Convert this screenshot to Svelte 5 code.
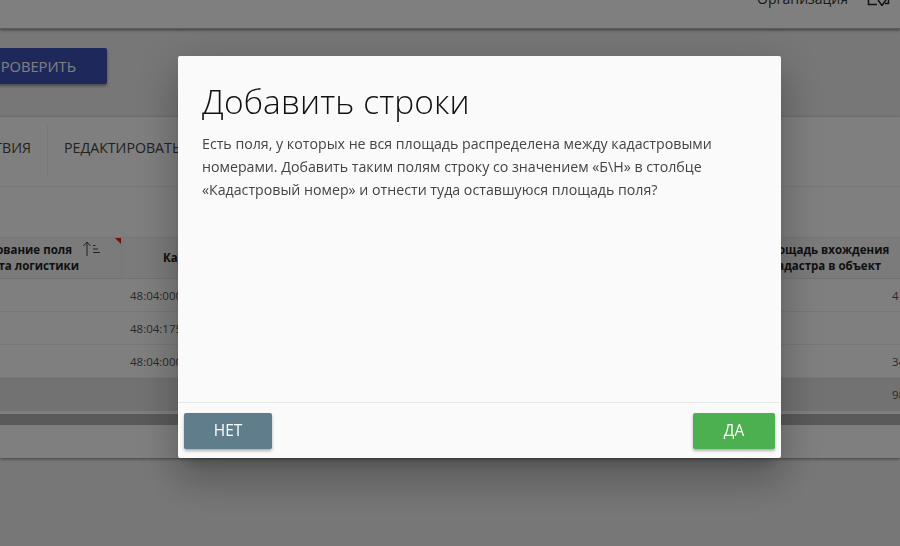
<script>
  const rows = [
    { cad: '48:04:000', area: '4' },
    { cad: '48:04:175', area: '' },
    { cad: '48:04:000', area: '34' }
  ];
</script>

<div class="page">
  <header class="topbar">
    <span class="org">Организация</span>
    <svg class="logout" width="24" height="24" viewBox="0 0 24 24" fill="none" stroke="#222" stroke-width="1.5">
      <path d="M1.500 0V22.500H10M21.500 14V21.500H18M11 18L15 23.500L19 18" />
    </svg>
  </header>

  <div class="actions">
    <button class="check">ПРОВЕРИТЬ</button>
  </div>

  <section class="card">
    <nav class="tabs">
      <span class="tab first">ДЕЙСТВИЯ</span>
      <span class="tab">РЕДАКТИРОВАТЬ</span>
    </nav>
    <div class="spacer"></div>
    <div class="thead">
      <div class="c1 th left">
        <span><b class="line1">Наименование поля</b><b>объекта логистики</b></span>
        <svg class="sort" width="20" height="16" viewBox="0 0 20 16" fill="none" stroke="#444" stroke-width="1">
          <path d="M5 15V1M1.500 5L5 1l3.500 4M11 4.500h2.500M11 8h5M11 11.500h7" />
        </svg>
        <i class="flag"></i>
      </div>
      <div class="c2 th">Кадастровый номер</div>
      <div class="c3 th right"><span>Площадь вхождения<br />кадастра в объект</span></div>
    </div>
    {#each rows as r}
      <div class="row">
        <div class="c1"></div>
        <div class="c2 cell">{r.cad}</div>
        <div class="c3 cell num">{r.area}</div>
      </div>
    {/each}
    <div class="row total">
      <div class="c1"></div>
      <div class="c2"></div>
      <div class="c3 cell num">98</div>
    </div>
    <div class="scrollbar"></div>
    <div class="foot"></div>
  </section>
</div>

<div class="overlay"></div>

<div class="modal" role="dialog">
  <div class="content">
    <h4>Добавить строки</h4>
    <p>Есть поля, у которых не вся площадь распределена между кадастровыми номерами. Добавить таким полям строку со значением «Б\Н» в столбце «Кадастровый номер» и отнести туда оставшуюся площадь поля?</p>
  </div>
  <div class="footer">
    <button class="btn no">НЕТ</button>
    <button class="btn yes">ДА</button>
  </div>
</div>

<style>
  :global(body) {
    margin: 0;
    overflow: hidden;
    background: #eee;
    font-family: "Open Sans", "Noto Sans", sans-serif;
  }
  .page {
    width: 900px;
    height: 546px;
    overflow: hidden;
    background: #eee;
  }
  .topbar {
    height: 29px;
    background: #fff;
    box-shadow: 0 1px 3px rgba(0, 0, 0, 0.5);
    border-bottom: 1px solid #bbb;
    box-sizing: border-box;
    display: flex;
    justify-content: flex-end;
    align-items: flex-end;
    position: relative;
    padding-right: 9px;
    gap: 19px;
    overflow: hidden;
  }
  .org {
    font-size: 14px;
    line-height: 19px;
    color: #333;
    margin-bottom: 20px;
  }
  .logout {
    margin-bottom: 22px;
    flex: none;
  }
  .actions {
    padding-top: 19px;
    height: 69px;
  }
  .check {
    display: block;
    margin-left: -20px;
    width: 127px;
    height: 36px;
    border: 0;
    border-radius: 2px;
    background: #3f51b5;
    color: #fff;
    font: 500 14.700px "Open Sans", sans-serif;
    text-align: right;
    padding-right: 31px;
    box-shadow: 0 2px 3px rgba(0, 0, 0, 0.4);
    white-space: nowrap;
  }
  .card {
    height: 341px;
    background: #fff;
    box-shadow: 0 1px 3px rgba(0, 0, 0, 0.45);
    box-sizing: border-box;
  }
  .tabs {
    height: 70px;
    display: flex;
    align-items: flex-start;
    padding-top: 7px;
    border-bottom: 1px solid #eee;
    box-sizing: border-box;
  }
  .tab {
    font-size: 14.200px;
    line-height: 19px;
    color: #444;
    padding: 14px 0 21px 16px;
    white-space: nowrap;
  }
  .tab.first {
    margin-left: -43px;
    padding-left: 0;
    padding-right: 16px;
    border-right: 1px solid #f2f2f2;
  }
  .spacer {
    height: 50px;
  }
  .thead {
    display: flex;
    height: 42px;
    background: #f6f6f6;
    border-top: 1px solid #eaeaea;
    border-bottom: 1px solid #e6e6e6;
    box-sizing: border-box;
    font: 700 11.500px/16px "Open Sans", sans-serif;
    color: #222;
  }
  .c1 {
    width: 122px;
    flex: none;
    box-sizing: border-box;
  }
  .thead .c1 {
    border-right: 1px solid #eee;
  }
  .c2 {
    flex: 1;
  }
  .c3 {
    width: 130px;
    flex: none;
  }
  .th {
    display: flex;
    align-items: center;
    position: relative;
    white-space: nowrap;
  }
  .th.left span {
    flex: none;
    margin-left: -61px;
    width: 140px;
    text-align: right;
  }
  .th.left b {
    display: block;
    font-weight: 700;
  }
  .th.left .line1 {
    margin-right: 7px;
  }
  .th.c2 {
    padding-left: 41px;
  }
  .th.right span {
    display: block;
    margin-left: -8px;
    text-align: center;
  }
  .sort {
    position: absolute;
    left: 82px;
    top: 3px;
  }
  .flag {
    position: absolute;
    top: 0;
    right: 0;
    border-top: 6px solid #e02020;
    border-left: 6px solid transparent;
  }
  .row {
    display: flex;
    height: 33px;
    border-bottom: 1px solid #eee;
    box-sizing: border-box;
    font-size: 11.500px;
    color: #555;
    background: #fff;
  }
  .cell {
    display: flex;
    align-items: center;
    padding-left: 8px;
    white-space: nowrap;
  }
  .num {
    padding-left: 122px;
    box-sizing: border-box;
  }
  .total {
    background: #e4e4e4;
    border: 0;
  }
  .scrollbar {
    height: 11px;
    margin-top: 3px;
    background: #b4b4b4;
  }
  .foot {
    height: 34px;
  }
  .overlay {
    position: fixed;
    inset: 0;
    background: rgba(0, 0, 0, 0.5);
  }
  .modal {
    position: fixed;
    left: 178px;
    top: 56px;
    width: 603px;
    height: 402px;
    background: #fafafa;
    border-radius: 2px;
    display: flex;
    flex-direction: column;
    box-shadow: 0 24px 38px 3px rgba(0, 0, 0, 0.14), 0 9px 46px 8px rgba(0, 0, 0, 0.12), 0 11px 15px -7px rgba(0, 0, 0, 0.2);
  }
  .content {
    flex: 1;
    padding: 23px 24px;
    box-sizing: border-box;
  }
  h4 {
    margin: 0;
    font-size: 33.500px;
    line-height: 44px;
    font-weight: 300;
    letter-spacing: 0.1px;
    color: #111;
  }
  p {
    margin: 9px 0 0;
    font-size: 14.200px;
    line-height: 23px;
    color: #444;
  }
  .footer {
    height: 56px;
    flex: none;
    border-top: 1px solid #e8e8e8;
    box-sizing: border-box;
    display: flex;
    justify-content: space-between;
    align-items: center;
    padding: 0 6px;
  }
  .btn {
    height: 36px;
    border: 0;
    border-radius: 2px;
    color: #fff;
    font: 400 15.500px "Open Sans", sans-serif;
    padding: 0 0 1px;
    box-shadow: 0 2px 3px rgba(0, 0, 0, 0.3);
  }
  .no {
    width: 88px;
    background: #607d8b;
  }
  .yes {
    width: 82px;
    background: #4caf50;
  }
</style>
